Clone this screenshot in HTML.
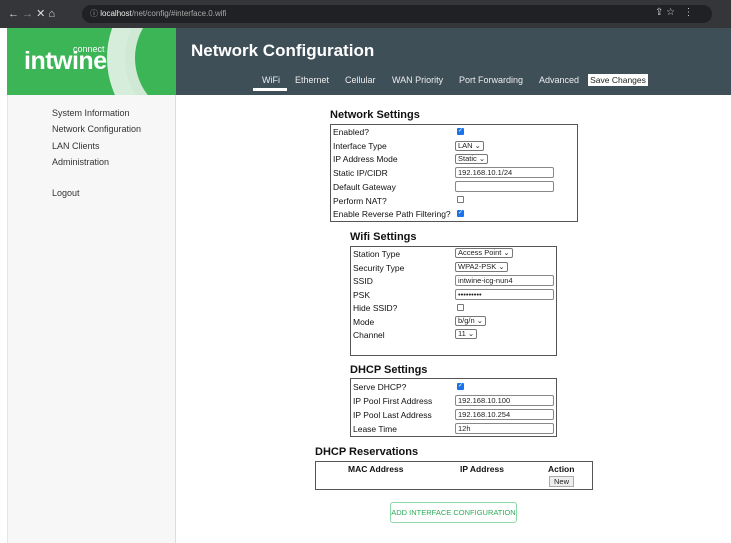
<!DOCTYPE html>
<html><head><style>
*{margin:0;padding:0;box-sizing:border-box}
body{width:731px;height:543px;overflow:hidden;background:#fff;font-family:"Liberation Sans",sans-serif;font-size:9px;color:#222;position:relative}
.a{position:absolute}
.bar{left:0;top:0;width:731px;height:28px;background:#35363a}
.url{left:82px;top:5px;width:630px;height:18px;background:#202124;border-radius:9px;color:#aaa;font-size:8px;line-height:18px;padding-left:8px}
.url b{color:#eee;font-weight:normal}
.side{left:7px;top:28px;width:169px;height:515px;background:#f7f7f7;border-right:1px solid #ddd;border-left:1px solid #e5e5e5}
.hdr{left:176px;top:28px;width:555px;height:67px;background:#3e4f58}
.nav{top:75px;color:#eee;font-size:9px}
.lab{font-size:9px;color:#333}
.box{border:1px solid #555}
h3{position:absolute;font-size:11px;font-weight:bold;color:#111}
.r{position:absolute;font-size:8.5px;color:#111}
.sel{position:absolute;height:10px;border:1px solid #777;border-radius:2px;font-size:7.5px;line-height:8px;padding:0 2px;background:#fff}
.inp{position:absolute;height:11px;border:1px solid #888;border-radius:2px;font-size:7.5px;line-height:9px;padding:0 2px;background:#fff;width:99px}
.cb{position:absolute;width:7px;height:7px;border-radius:1px;background:#1a73e8;color:#fff;font-size:6px;line-height:7px;text-align:center}
.cbo{position:absolute;width:7px;height:7px;border-radius:1px;border:1px solid #777}
</style></head><body>
<div class="a bar"></div>
<div class="a" style="left:8px;top:7px;color:#ddd;font-size:11px">← <span style="color:#888">→</span> ✕ ⌂</div>
<div class="a url">ⓘ <b>localhost</b>/net/config/#interface.0.wifi</div>
<div class="a" style="left:655px;top:7px;color:#ccc;font-size:10px">⇪ ☆ &nbsp; ⋮</div>
<div class="a side"></div>
<div class="a" style="left:7px;top:28px;width:169px;height:67px;background:#3bb556;overflow:hidden">
<div class="a" style="left:100px;top:-60px;width:180px;height:180px;border-radius:50%;border:24px solid #e8f3ea;opacity:.9"></div>
<div class="a" style="left:118px;top:-40px;width:140px;height:140px;border-radius:50%;border:10px solid #cfe9d4"></div>
<div class="a" style="left:17px;top:19px;color:#fff;font-size:25px;font-weight:bold;letter-spacing:-0.5px">intwine</div>
<div class="a" style="left:66px;top:16px;color:#fff;font-size:9px">connect</div>
</div>
<div class="a hdr"></div>
<div class="a" style="left:191px;top:41px;color:#fff;font-size:17px;font-weight:bold">Network Configuration</div>
<div class="a nav" style="left:262px">WiFi</div>
<div class="a" style="left:253px;top:88px;width:34px;height:3px;background:#fff"></div>
<div class="a nav" style="left:295px">Ethernet</div>
<div class="a nav" style="left:345px">Cellular</div>
<div class="a nav" style="left:392px">WAN Priority</div>
<div class="a nav" style="left:459px">Port Forwarding</div>
<div class="a nav" style="left:539px">Advanced</div>
<div class="a" style="left:588px;top:74px;width:60px;height:12px;background:#fff;color:#222;font-size:8.5px;text-align:center;line-height:12px">Save Changes</div>
<div class="a lab" style="left:52px;top:108px">System Information</div>
<div class="a lab" style="left:52px;top:124px">Network Configuration</div>
<div class="a lab" style="left:52px;top:141px">LAN Clients</div>
<div class="a lab" style="left:52px;top:157px">Administration</div>
<div class="a lab" style="left:52px;top:188px">Logout</div>

<h3 style="left:330px;top:109px">Network Settings</h3>
<div class="a box" style="left:330px;top:124px;width:248px;height:98px"></div>
<div class="r" style="left:333px;top:127px">Enabled?</div><div class="cb" style="left:457px;top:128px">✓</div>
<div class="r" style="left:333px;top:141px">Interface Type</div><div class="sel" style="left:455px;top:141px">LAN ⌄</div>
<div class="r" style="left:333px;top:154px">IP Address Mode</div><div class="sel" style="left:455px;top:154px">Static ⌄</div>
<div class="r" style="left:333px;top:168px">Static IP/CIDR</div><div class="inp" style="left:455px;top:167px">192.168.10.1/24</div>
<div class="r" style="left:333px;top:182px">Default Gateway</div><div class="inp" style="left:455px;top:181px"></div>
<div class="r" style="left:333px;top:196px">Perform NAT?</div><div class="cbo" style="left:457px;top:196px"></div>
<div class="r" style="left:333px;top:209px">Enable Reverse Path Filtering?</div><div class="cb" style="left:457px;top:210px">✓</div>

<h3 style="left:350px;top:231px">Wifi Settings</h3>
<div class="a box" style="left:350px;top:246px;width:207px;height:110px"></div>
<div class="r" style="left:353px;top:249px">Station Type</div><div class="sel" style="left:455px;top:248px">Access Point ⌄</div>
<div class="r" style="left:353px;top:263px">Security Type</div><div class="sel" style="left:455px;top:262px">WPA2-PSK ⌄</div>
<div class="r" style="left:353px;top:276px">SSID</div><div class="inp" style="left:455px;top:275px">intwine-icg-nun4</div>
<div class="r" style="left:353px;top:290px">PSK</div><div class="inp" style="left:455px;top:289px">•••••••••</div>
<div class="r" style="left:353px;top:303px">Hide SSID?</div><div class="cbo" style="left:457px;top:304px"></div>
<div class="r" style="left:353px;top:317px">Mode</div><div class="sel" style="left:455px;top:316px">b/g/n ⌄</div>
<div class="r" style="left:353px;top:330px">Channel</div><div class="sel" style="left:455px;top:329px">11 ⌄</div>

<h3 style="left:350px;top:364px">DHCP Settings</h3>
<div class="a box" style="left:350px;top:378px;width:207px;height:59px"></div>
<div class="r" style="left:353px;top:382px">Serve DHCP?</div><div class="cb" style="left:457px;top:383px">✓</div>
<div class="r" style="left:353px;top:396px">IP Pool First Address</div><div class="inp" style="left:455px;top:395px">192.168.10.100</div>
<div class="r" style="left:353px;top:410px">IP Pool Last Address</div><div class="inp" style="left:455px;top:409px">192.168.10.254</div>
<div class="r" style="left:353px;top:424px">Lease Time</div><div class="inp" style="left:455px;top:423px">12h</div>

<h3 style="left:315px;top:446px">DHCP Reservations</h3>
<div class="a box" style="left:315px;top:461px;width:278px;height:29px"></div>
<div class="r" style="left:348px;top:464px;font-weight:bold">MAC Address</div>
<div class="r" style="left:460px;top:464px;font-weight:bold">IP Address</div>
<div class="r" style="left:548px;top:464px;font-weight:bold">Action</div>
<div class="a" style="left:549px;top:476px;width:25px;height:11px;border:1px solid #aaa;background:#eee;font-size:7.5px;text-align:center;line-height:9px">New</div>
<div class="a" style="left:390px;top:502px;width:127px;height:21px;border:1px solid #8dd9a8;border-radius:3px;color:#2eab5b;font-size:7.5px;text-align:center;line-height:19px">ADD INTERFACE CONFIGURATION</div>
</body></html>
